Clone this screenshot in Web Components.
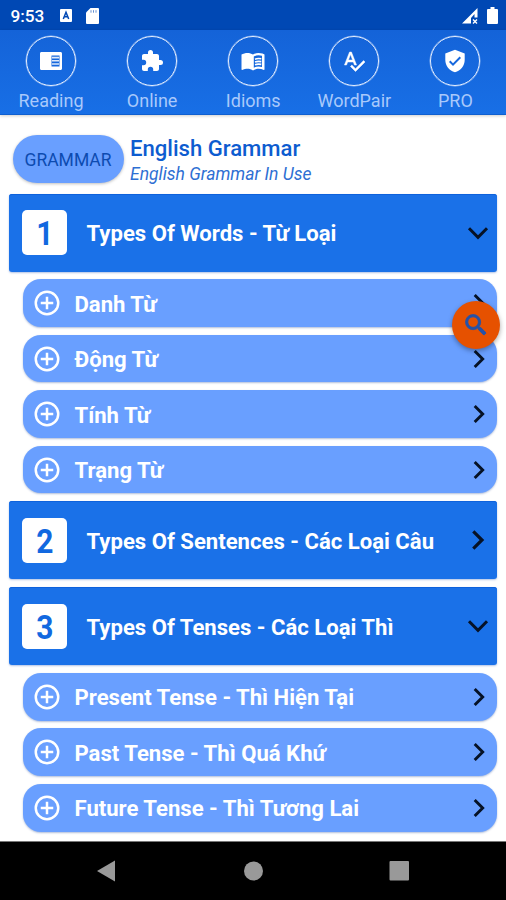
<!DOCTYPE html>
<html lang="vi">
<head>
<meta charset="utf-8">
<title>English Grammar</title>
<style>
  html, body {
    margin: 0;
    height: 100%;
    overflow: hidden;
    background: #fff;
    font-family: Roboto, "Noto Sans", sans-serif;
  }
</style>
</head>
<body>
<grammar-app></grammar-app>

<script>
const ICONS = {
  reader: `<path fill="currentColor" fill-rule="evenodd" d="M2.500 3h19c.9 0 1.500.7 1.500 1.500v15c0 .8-.6 1.500-1.500 1.500h-19C1.600 21 1 20.300 1 19.500v-15C1 3.700 1.600 3 2.500 3zM12.500 6.500v11h8v-11z"/><path fill="currentColor" opacity=".85" d="M13 7.800h7v1.600h-7zM13 11h7v1.600h-7zM13 14.200h7v1.600h-7z"/>`,
  puzzle: `<path fill="currentColor" d="M20.500 11H19V7c0-1.100-.9-2-2-2h-4V3.500a2.500 2.500 0 0 0-5 0V5H4c-1.100 0-2 .9-2 2v3.800h1.500a2.700 2.700 0 0 1 0 5.400H2V20c0 1.100.9 2 2 2h3.800v-1.500a2.700 2.700 0 0 1 5.400 0V22H17c1.100 0 2-.9 2-2v-4h1.500a2.500 2.500 0 0 0 0-5z"/>`,
  book: `<path fill="currentColor" fill-rule="evenodd" d="M21.500 4.500c-1.300-.4-2.600-.6-4-.6-1.950 0-4.050.5-5.500 1.600-1.450-1.100-3.550-1.600-5.500-1.600S2 4.400.5 5.500v15c0 .3.300.5.600.5 1.700-.8 3.900-1.200 5.400-1.200 1.950 0 4.050.5 5.500 1.600 1.350-.9 3.800-1.600 5.500-1.600 1.650 0 3.700.4 5.400 1.200.3 0 .6-.2.600-.5v-15c-.6-.5-1.300-.8-2-1zm-.5 13.600c-1.100-.3-2.300-.5-3.500-.5-1.500 0-3.300.4-4.700 1.100V7.500c1.400-.7 3.200-1.200 4.700-1.200 1.200 0 2.400.2 3.500.5z"/><path fill="none" stroke="currentColor" stroke-width="1.600" d="M14 10.200c2-.8 4-.8 6.300-.4M14 13c2-.8 4-.8 6.300-.4M14 15.800c2-.8 4-.8 6.300-.4"/>`,
  spell: `<path fill="currentColor" stroke="currentColor" stroke-width=".5" d="M12.450 16h2.090L9.430 3H7.570L2.460 16h2.090l1.120-3h5.640l1.140 3zm-6.020-5L8.500 5.480 10.570 11H6.430zm15.160.59l-8.090 8.090L9.830 16l-1.410 1.410 5.090 5.090L23 13l-1.410-1.410z"/>`,
  shield: `<path fill="currentColor" d="M12 .8L2.300 4.500V11c0 5.600 4 10.900 9.700 12.200 5.700-1.300 9.700-6.600 9.700-12.200V4.500L12 .8zm-2 16.200l-4-4 1.410-1.410L10 14.170l6.590-6.590L18 9l-8 8z"/>`,
  plus: `<path fill="currentColor" d="M13 7h-2v4H7v2h4v4h2v-4h4v-2h-4V7zm-1-5a10 10 0 1 0 0 20 10 10 0 0 0 0-20zm0 18a8 8 0 1 1 0-16 8 8 0 0 1 0 16z"/>`,
  right: `<path fill="none" stroke="currentColor" stroke-width="3.200" d="M7.300 3.300L16 12l-8.700 8.700"/>`,
  down: `<path fill="none" stroke="currentColor" stroke-width="3" d="M3 7.300L12 16.300l9-9"/>`,
  search: `<path fill="currentColor" d="M15.500 14h-.79l-.28-.27A6.470 6.470 0 0 0 16 9.500 6.500 6.500 0 1 0 9.500 16c1.610 0 3.090-.59 4.230-1.570l.27.28v.79l5 4.990L20.490 19l-4.990-5zm-6 0a4.500 4.500 0 1 1 0-9 4.500 4.500 0 0 1 0 9z" stroke="currentColor" stroke-width=".7"/><path stroke="currentColor" stroke-width="3.200" d="M14.800 14.800l4.800 4.800"/>`,
};

class AppIcon extends HTMLElement {
  connectedCallback() {
    this.attachShadow({ mode: "open" }).innerHTML = `
    <style>
      :host { display: block; width: 24px; height: 24px; flex: none; }
      svg { display: block; width: 100%; height: 100%; }
    </style>
    <svg viewBox="0 0 24 24">${ICONS[this.getAttribute("name")]}</svg>`;
  }
}

class StatusBar extends HTMLElement {
  connectedCallback() {
    this.attachShadow({ mode: "open" }).innerHTML = `
    <style>
      :host {
        display: flex;
        align-items: center;
        box-sizing: border-box;
        height: 30px;
        padding: 1px 8px 0 10.500px;
        background: #0048b4;
        color: #fff;
      }
      .time { font-size: 17.200px; width: 49.500px; font-weight: 500; }
      svg { display: block; }
      .card { margin-left: 14px; }
      .signal { margin-left: auto; margin-right: 8px; }
    </style>
    <span class="time">9:53</span>
    <svg width="12" height="13" viewBox="0 0 12 13"><rect width="12" height="13" rx="1" fill="#fff"/><path d="M3.300 10L6 3.200 8.700 10M4.300 7.800h3.400" fill="none" stroke="#0048b4" stroke-width="1.500"/></svg>
    <svg class="card" width="13" height="16" viewBox="0 0 13 16"><path d="M4.500 0H12a1 1 0 0 1 1 1v14a1 1 0 0 1-1 1H1a1 1 0 0 1-1-1V4.500z" fill="#fff"/><path d="M5 2.200v2.500M7.500 2.200v2.500M10 2.200v2.500" stroke="#0048b4" stroke-width="1" opacity=".6"/></svg>
    <svg class="signal" width="17" height="16" viewBox="0 0 17 16"><path fill="#fff" fill-rule="evenodd" d="M0 15.500L15.500 0v9.500h-3V6L9 10v5.500z"/><path d="M11 11.500l4 4M15 11.500l-4 4" stroke="#fff" stroke-width="1.400"/></svg>
    <svg width="11" height="17" viewBox="0 0 11 17"><path fill="#fff" d="M3.500 0h4v2H10a1 1 0 0 1 1 1v13a1 1 0 0 1-1 1H1a1 1 0 0 1-1-1V3a1 1 0 0 1 1-1h2.500z"/></svg>`;
  }
}

class NavTab extends HTMLElement {
  connectedCallback() {
    this.attachShadow({ mode: "open" }).innerHTML = `
    <style>
      :host {
        display: flex;
        flex-direction: column;
        align-items: center;
        color: #fff;
      }
      .ring {
        box-sizing: border-box;
        width: 50px;
        height: 50px;
        display: grid;
        place-items: center;
        border: 1.500px solid #e6efff;
        border-radius: 50%;
        box-shadow: 0 0 0 .5px rgba(230, 239, 255, .6);
      }
      .label {
        margin-top: 4px;
        font-size: 18px;
        line-height: 22px;
        color: #a9c9fb;
      }
    </style>
    <div class="ring"><app-icon name="${this.getAttribute("icon")}"></app-icon></div>
    <span class="label"><slot></slot></span>`;
  }
}

class TabBar extends HTMLElement {
  connectedCallback() {
    this.attachShadow({ mode: "open" }).innerHTML = `
    <style>
      :host {
        display: grid;
        grid-template-columns: repeat(5, 1fr);
        box-sizing: border-box;
        height: 85px;
        padding: 6px 0 0 .5px;
        background: linear-gradient(#1463d8, #186fe6);
        border-bottom: 1px solid #0f5fd0;
        box-shadow: 0 1px 3px rgba(0, 0, 0, .2);
      }
    </style>
    <slot></slot>`;
  }
}

class PageHeading extends HTMLElement {
  connectedCallback() {
    this.attachShadow({ mode: "open" }).innerHTML = `
    <style>
      :host { display: flex; align-items: center; gap: 6.500px; height: 48px; padding: 20px 0 10.500px 12.500px; }
      .chip {
        width: 111px;
        height: 48px;
        line-height: 50px;
        text-align: center;
        border-radius: 24px;
        background: #699fff;
        color: #0d4bb0;
        font-size: 17.500px;
        box-shadow: 0 1px 3px rgba(0, 0, 0, .25);
      }
      h1, p { margin: 0; white-space: nowrap; color: #0d5cd0; }
      h1 { padding-top: 2px; font-size: 22.100px; line-height: 28px; font-weight: 500; }
      p { font-size: 17.500px; line-height: 24px; font-style: italic; color: #2e6fd3; }
    </style>
    <div class="chip">GRAMMAR</div>
    <div>
      <h1><slot></slot></h1>
      <p><slot name="sub"></slot></p>
    </div>`;
  }
}

class TopicGroup extends HTMLElement {
  connectedCallback() {
    const arrow = this.hasAttribute("open") ? "down" : "right";
    this.attachShadow({ mode: "open" }).innerHTML = `
    <style>
      :host { display: grid; gap: 7.700px; }
      header {
        display: flex;
        align-items: center;
        box-sizing: border-box;
        height: 78px;
        margin-left: 9px;
        padding: 0 7px 0 13px;
        border-radius: 3px;
        background: #1a71e8;
        color: #fff;
        box-shadow: inset 0 1px #0e62dc, 0 1px 2px rgba(30, 80, 180, .35);
      }
      .number {
        width: 45px;
        height: 45px;
        line-height: 46px;
        text-align: center;
        border-radius: 5px;
        background: #fff;
        color: #1268e0;
        font-size: 34px;
        font-weight: 700;
      }
      .number span { display: inline-block; transform: scaleX(.88); }
      .title { flex: 1; margin-left: 19.500px; padding-top: 1px; font-size: 22.100px; font-weight: 700; white-space: nowrap; }
      app-icon { color: #061226; }
    </style>
    <header>
      <div class="number"><span>${this.getAttribute("number")}</span></div>
      <span class="title">${this.getAttribute("label")}</span>
      <app-icon name="${arrow}"></app-icon>
    </header>
    <slot></slot>`;
  }
}

class TopicItem extends HTMLElement {
  connectedCallback() {
    this.attachShadow({ mode: "open" }).innerHTML = `
    <style>
      :host {
        display: flex;
        align-items: center;
        box-sizing: border-box;
        height: 47.800px;
        margin-left: 23px;
        padding: 0 7px 0 9.500px;
        border-radius: 18px;
        background: #699fff;
        color: #fff;
        box-shadow: 0 1px 2px rgba(30, 70, 150, .35);
      }
      .plus { width: 30px; height: 30px; margin-left: -.5px; }
      .title { flex: 1; margin-left: 12.500px; padding-top: 1px; font-size: 22.100px; font-weight: 700; white-space: nowrap; }
      .arrow { width: 22px; height: 22px; color: #061226; }
    </style>
    <app-icon class="plus" name="plus"></app-icon>
    <span class="title"><slot></slot></span>
    <app-icon class="arrow" name="right"></app-icon>`;
  }
}

class SearchButton extends HTMLElement {
  connectedCallback() {
    this.attachShadow({ mode: "open" }).innerHTML = `
    <style>
      :host {
        display: grid;
        place-items: center;
        width: 48px;
        height: 48px;
        border-radius: 50%;
        background: #e65100;
        color: #2552a8;
        box-shadow: 0 2px 5px rgba(0, 0, 0, .35);
      }
      app-icon { width: 28px; height: 28px; }
    </style>
    <app-icon name="search"></app-icon>`;
  }
}

class SystemNav extends HTMLElement {
  connectedCallback() {
    this.attachShadow({ mode: "open" }).innerHTML = `
    <style>
      :host {
        display: flex;
        justify-content: center;
        align-items: center;
        gap: 126px;
        box-sizing: border-box;
        height: 59px;
        border-top: 1px solid #777;
        background: #000;
      }
      svg { display: block; fill: #999; }
    </style>
    <svg width="20" height="22"><path d="M0 11L18 .5v21z"/></svg>
    <svg width="20" height="20"><circle cx="10.500" cy="10" r="9.500"/></svg>
    <svg width="20" height="20"><rect x=".5" width="19.500" height="19.500" rx="1"/></svg>`;
  }
}

class GrammarApp extends HTMLElement {
  connectedCallback() {
    this.attachShadow({ mode: "open" }).innerHTML = `
    <style>
      :host {
        position: relative;
        display: flex;
        flex-direction: column;
        height: 900px;
        overflow: hidden;
      }
      main { flex: 1; min-height: 0; }
      .topics { display: grid; gap: 7.900px; padding-right: 9px; }
      search-button { position: absolute; left: 452px; top: 301px; }
    </style>
    <status-bar></status-bar>
    <tab-bar>
      <nav-tab icon="reader">Reading</nav-tab>
      <nav-tab icon="puzzle">Online</nav-tab>
      <nav-tab icon="book">Idioms</nav-tab>
      <nav-tab icon="spell">WordPair</nav-tab>
      <nav-tab icon="shield">PRO</nav-tab>
    </tab-bar>
    <main>
      <page-heading>English Grammar<span slot="sub">English Grammar In Use</span></page-heading>
      <div class="topics">
        <topic-group open number="1" label="Types Of Words - Từ Loại">
          <topic-item>Danh Từ</topic-item>
          <topic-item>Động Từ</topic-item>
          <topic-item>Tính Từ</topic-item>
          <topic-item>Trạng Từ</topic-item>
        </topic-group>
        <topic-group number="2" label="Types Of Sentences - Các Loại Câu"></topic-group>
        <topic-group open number="3" label="Types Of Tenses - Các Loại Thì">
          <topic-item>Present Tense - Thì Hiện Tại</topic-item>
          <topic-item>Past Tense - Thì Quá Khứ</topic-item>
          <topic-item>Future Tense - Thì Tương Lai</topic-item>
        </topic-group>
      </div>
    </main>
    <system-nav></system-nav>
    <search-button></search-button>`;
  }
}

customElements.define("app-icon", AppIcon);
customElements.define("status-bar", StatusBar);
customElements.define("nav-tab", NavTab);
customElements.define("tab-bar", TabBar);
customElements.define("page-heading", PageHeading);
customElements.define("topic-group", TopicGroup);
customElements.define("topic-item", TopicItem);
customElements.define("search-button", SearchButton);
customElements.define("system-nav", SystemNav);
customElements.define("grammar-app", GrammarApp);
</script>
</body>
</html>
